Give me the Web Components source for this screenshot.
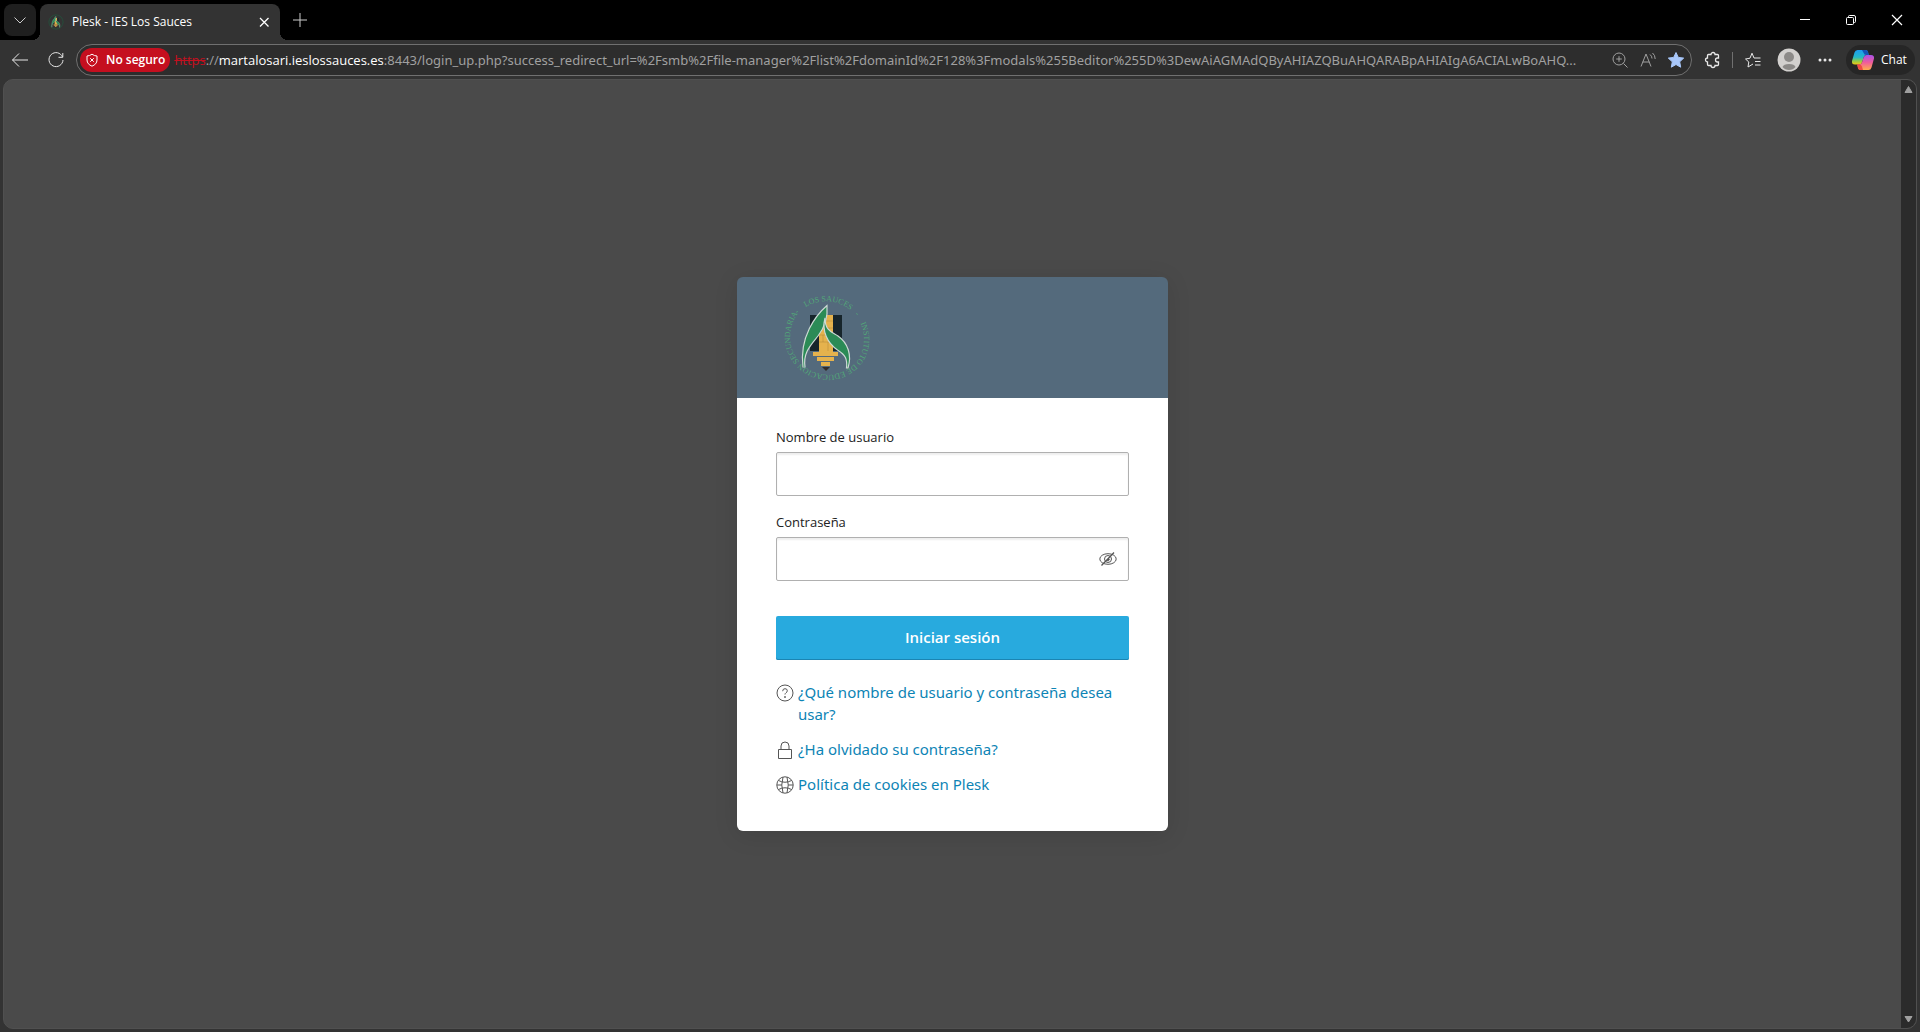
<!DOCTYPE html>
<html lang="es">
<head>
<meta charset="utf-8">
<title>Plesk - IES Los Sauces</title>
<style>
  body {
    margin: 0;
    background: #333;
    font-family: "Open Sans", "Noto Sans", sans-serif;
  }
</style>
</head>
<body>
<browser-window>
  <tab-strip slot="tabs">
    <browser-tab>Plesk - IES Los Sauces</browser-tab>
  </tab-strip>
  <tool-bar slot="toolbar">
    <address-bar scheme="https" host="martalosari.ieslossauces.es" path=":8443/login_up.php?success_redirect_url=%2Fsmb%2Ffile-manager%2Flist%2FdomainId%2F128%3Fmodals%255Beditor%255D%3DewAiAGMAdQByAHIAZQBuAHQARABpAHIAIgA6ACIALwBoAHQ...">No seguro</address-bar>
  </tool-bar>
  <login-card>
    <login-field label="Nombre de usuario" type="text"></login-field>
    <login-field label="Contraseña" type="password"></login-field>
    <login-button>Iniciar sesión</login-button>
    <login-link slot="links" icon="question">¿Qué nombre de usuario y contraseña desea usar?</login-link>
    <login-link slot="links" icon="lock">¿Ha olvidado su contraseña?</login-link>
    <login-link slot="links" icon="globe">Política de cookies en Plesk</login-link>
  </login-card>
</browser-window>

<script>
const ICONS = {
  chevron: [16, `<path d="M2.5 5.5 8 11l5.5-5.5"/>`],
  close: [16, `<path d="m4 4 8.500 8.500M12.500 4 4 12.500" stroke-width="1.300"/>`],
  plus: [16, `<path d="M8 1v14M1 8h14"/>`],
  minimize: [12, `<path d="M1 5.500h10"/>`],
  restore: [12, `<rect x="1.500" y="3.500" width="7" height="7" rx="1"/><path d="M3.500 3.500v-1q0-1 1-1h4.500q1.500 0 1.500 1.500v4.500q0 1-1 1h-1"/>`],
  exit: [12, `<path d="m1 1 10 10M11 1 1 11" stroke-width="1.200"/>`],
  back: [20, `<path d="M18 10H2.500M9 3.500 2.500 10 9 16.500"/>`],
  reload: [20, `<path d="M16.500 7A7 7 0 1 0 17 10M16.800 3v4.300h-4.300"/>`],
  shield: [14, `<path d="M7 1.200Q9.500 3 12 3v4c0 3-2 5-5 6.200C4 12 2 10 2 7V3Q4.500 3 7 1.200zM5.200 5.200l3.600 3.600M8.800 5.200 5.200 8.800"/>`],
  zoom: [18, `<circle cx="8" cy="8" r="6"/><path d="m12.500 12.500 4 4M8 5.200v5.600M5.200 8h5.600"/>`],
  read: [18, `<path d="m2 15.500 5-12.500 5 12.500M3.700 11h6.600M11 3.500q2 1.500 2 4M13.500 2q2.700 2.200 2.700 6"/>`],
  star: [18, `<path d="m9 1.500 2.300 4.900 5.400.700-4 3.700 1 5.400L9 13.500l-4.700 2.700 1-5.400-4-3.700 5.400-.700z" fill="currentColor"/>`],
  puzzle: [18, `<path d="M4.500 3.500h2.500a2 2 0 0 1 4 0h2.500q1 0 1 1v2.500h-1a2 2 0 0 0 0 4h1v2.500q0 1-1 1H11a2 2 0 0 1-4 0H4.500q-1 0-1-1V11a2 2 0 0 1 0-4V4.500q0-1 1-1z" stroke-width="1.300"/>`],
  favorites: [18, `<path d="M9 13 4 16l.800-5L1.500 8 6 7.200l2-5 2 4.800h6.500M11 10.500h5.500M11 14h5.500"/>`],
  avatar: [24, `<circle cx="12" cy="12" r="11.500" fill="#d2d0ce" stroke="none"/><circle cx="12" cy="9" r="5" fill="#8c8a88" stroke="none"/><path d="M5.500 19q1-3 6.500-3t6.500 3Q16 22 12 22t-6.500-3z" fill="#8c8a88" stroke="none"/>`],
  dots: [16, `<g fill="currentColor" stroke="none"><circle cx="3" cy="8" r="1.500"/><circle cx="8" cy="8" r="1.500"/><circle cx="13" cy="8" r="1.500"/></g>`],
  copilot: [24, `
    <defs>
      <linearGradient id="cool" x1="0" y1="0" x2="0" y2="1"><stop stop-color="#1c9df0"/><stop offset=".5" stop-color="#25b8c8"/><stop offset=".75" stop-color="#8ccb4b"/><stop offset="1" stop-color="#f2c713"/></linearGradient>
      <linearGradient id="warm" x1="0" y1="0" x2="0" y2="1"><stop stop-color="#a852ea"/><stop offset=".5" stop-color="#f05c9b"/><stop offset="1" stop-color="#ffac4c"/></linearGradient>
    </defs>
    <g stroke="none">
      <path d="M6.500 2h8q2 0 2.500 2l.700 3h-2.200q-2 0-2.700 2l-1.600 5q-.700 2.500-3 2.500H4Q.500 16.500 1 13L3.500 4.500Q4.300 2 6.500 2z" fill="url(#cool)"/>
      <path d="M11 2h3.500q2 0 2.500 2l.700 3h-2.500q-2 0-2.500-2z" fill="#1554b8"/>
      <path d="M17.500 22h-8q-2 0-2.500-2l-.700-3.500h2q2 0 2.700-2l1.600-5q.700-2.500 3-2.500H20q3.500 0 3 3.500L20.500 19.500Q19.700 22 17.500 22z" fill="url(#warm)"/>
      <path d="M12 22H9.500Q7.500 22 7 20l-.700-3.500h2q2 0 2.700 2z" fill="#f04a45"/>
    </g>`],
  up: [15, `<path d="M7.500 4.500 11 10.500H4z" fill="currentColor" stroke-linejoin="round"/>`],
  down: [15, `<path d="M4 4.500h7l-3.500 5.500z" fill="currentColor" stroke-linejoin="round"/>`],
  hidden: [18, `<ellipse cx="9" cy="9" rx="8.200" ry="5.300"/><circle cx="9" cy="9" r="3.500"/><path d="M15 2.500 2.500 15.500M10.500 9 8.500 11" stroke-width="1.300"/>`],
  question: [18, `<circle cx="9" cy="9" r="8"/><path d="M6.700 7.200Q6.700 4.700 9 4.700t2.300 2.100Q11.300 8 10 8.800 9 9.500 9 10.500"/><circle cx="9" cy="13" r=".500" fill="currentColor"/>`],
  lock: [18, `<path d="M2.500 8.500h13v9h-13zM5 8.500V5q0-4 4-4t4 4v3.500"/>`],
  globe: [18, `<circle cx="9" cy="9" r="8.200"/><path d="M7 1.200Q4.500 9 7 16.800M11 1.200Q13.500 9 11 16.800M2.500 4.500Q9 8 15.500 4.500M2.500 13.500Q9 10 15.500 13.500M1 9h4.700M12.300 9H17"/>`]
};

// Crest of the school: two willow leaves over a pencil
const CREST = /*HTML*/ `
  <path d="M31 25h32v36H31z" fill="#17252b"/>
  <path d="M40 25h14v37H40z" fill="#e5b24d"/>
  <path d="M40 31h14M40 38h14M40 45h14M40 52h14M47 25v6M44 31v7M50 38v7M44 45v7M49 52v9" stroke="#b98d3b" stroke-width=".6"/>
  <path d="M34 62h25v4H34zM38 67h17v4H38zM42 72h9v4h-9z" fill="#e5b24d"/>
  <path d="M43 77h8l-4 4z" fill="#322d2b"/>
  <path d="M48 15.500C37 25 20 47 24 77h2C24 63 31 56 39 46c7-9 10-19 9-30.500z" fill="#2b8b56" stroke="#ccd9d4" stroke-width="1.200"/>
  <path d="M46 28c0 13 7 14 13 18 10 7 14 19 10 32h-1.500c1-9-1-13-9-18-10-7-16-19-12.500-32z" fill="#2b8b56" stroke="#ccd9d4" stroke-width="1.200"/>
`;

// Defines an element whose shadow root is cloned from a template
function define(name, html, setup) {
  const template = document.createElement("template");
  template.innerHTML = `<style>
    :host, *, *::before, *::after { box-sizing: border-box; }
    button { border: 0; padding: 0; margin: 0; background: none; color: inherit; font: inherit; display: grid; place-items: center; }
  </style>` + html;

  customElements.define(name, class extends HTMLElement {
    constructor() {
      super();
      this.attachShadow({ mode: "open" }).appendChild(template.content.cloneNode(true));
    }

    connectedCallback() {
      if (setup) setup(this, this.shadowRoot);
    }
  });
}

define("ui-icon", /*HTML*/ `
  <style>
    :host { display: block; flex: none; }
    svg { display: block; }
  </style>
  <svg fill="none" stroke="currentColor" aria-hidden="true"></svg>
`, (host, root) => {
  const [size, body] = ICONS[host.getAttribute("name")];
  const svg = root.querySelector("svg");
  svg.setAttribute("width", size);
  svg.setAttribute("height", size);
  svg.setAttribute("viewBox", `0 0 ${size} ${size}`);
  svg.innerHTML = body;
});

// The motto runs clockwise round the whole crest, starting at the upper left dash
define("school-logo", /*HTML*/ `
  <style>
    :host { display: block; }
    svg { display: block; }
    text { font: 8px "Liberation Serif", serif; fill: #52a878; }
  </style>
  <svg width="96" height="96" viewBox="0 0 96 96" fill="none" role="img" aria-label="IES Los Sauces">
    <path id="ring" d="M18.500 24.100A38 38 0 0 1 77.500 71.900A38 38 0 0 1 18.500 24.100"/>
    ${CREST}
    <text><textPath href="#ring">-&nbsp;&nbsp;&nbsp;&nbsp;LOS SAUCES&nbsp;&nbsp;&nbsp;-&nbsp;&nbsp;&nbsp;&nbsp;INSTITUTO DE EDUCACION SECUNDARIA</textPath></text>
  </svg>
`);

define("browser-tab", /*HTML*/ `
  <style>
    :host {
      position: relative;
      display: flex;
      align-items: center;
      width: 240px;
      height: 36px;
      padding: 0 8px;
      background: #333;
      border-radius: 8px 8px 0 0;
      font-size: 12px;
      color: #fff;
    }
    :host::before, :host::after {
      content: "";
      position: absolute;
      bottom: 0;
      width: 8px;
      height: 8px;
    }
    :host::before { left: -8px; background: radial-gradient(circle at 0 0, transparent 8px, #333 8px); }
    :host::after { right: -8px; background: radial-gradient(circle at 100% 0, transparent 8px, #333 8px); }
    svg { flex: none; }
    span { flex: 1; padding-left: 8px; padding-bottom: 2px; white-space: nowrap; }
    button { width: 16px; height: 32px; }
  </style>
  <svg width="16" height="16" viewBox="3 3 90 90" fill="none" aria-hidden="true">
    <circle cx="48" cy="48" r="40" stroke="#24503c" stroke-width="5"/>${CREST}
  </svg>
  <span><slot></slot></span>
  <button aria-label="Cerrar pestaña"><ui-icon name="close"></ui-icon></button>
`);

define("tab-strip", /*HTML*/ `
  <style>
    :host { display: flex; height: 40px; background: #000; color: #fff; }
    .menu { width: 32px; height: 32px; margin: 4px; background: #1f1f1f; border-radius: 8px; color: #ccc; }
    .tabs { display: flex; align-items: end; flex: 1; }
    .new { width: 40px; height: 32px; align-self: center; color: #ccc; }
    .window { display: flex; }
    .window button { width: 46px; height: 40px; }
  </style>
  <button class="menu" aria-label="Acciones de pestaña"><ui-icon name="chevron"></ui-icon></button>
  <div class="tabs">
    <slot></slot>
    <button class="new" aria-label="Nueva pestaña"><ui-icon name="plus"></ui-icon></button>
  </div>
  <div class="window">
    <button aria-label="Minimizar"><ui-icon name="minimize"></ui-icon></button>
    <button aria-label="Restaurar"><ui-icon name="restore"></ui-icon></button>
    <button aria-label="Cerrar"><ui-icon name="exit"></ui-icon></button>
  </div>
`);

define("address-bar", /*HTML*/ `
  <style>
    :host {
      display: flex;
      align-items: center;
      flex: 1;
      min-width: 0;
      height: 32px;
      padding: 0 1px 0 3px;
      border: 1px solid #707070;
      border-radius: 16px;
      background: #2d2d2d;
      color: #a0a0a0;
      font-size: 13px;
    }
    .badge {
      display: flex;
      align-items: center;
      gap: 7px;
      flex: none;
      height: 24px;
      padding: 0 5px;
      margin-right: 4px;
      border-radius: 12px;
      background: #c50f1f;
      color: #fff;
      font-size: 12px;
      font-weight: 600;
    }
    .url { flex: 1; min-width: 0; overflow: hidden; white-space: nowrap; }
    .scheme { color: #c50f1f; text-decoration: line-through; }
    .host { color: #fff; }
    .path { font-family: "Noto Sans", sans-serif; }
    .action { width: 28px; height: 28px; flex: none; }
    .favorite { color: #a8c7fa; }
  </style>
  <button class="badge"><ui-icon name="shield"></ui-icon><slot></slot></button>
  <div class="url" role="textbox" aria-label="Barra de direcciones"><span class="scheme"></span>://<span class="host"></span><span class="path"></span></div>
  <button class="action" aria-label="Zoom"><ui-icon name="zoom"></ui-icon></button>
  <button class="action" aria-label="Leer en voz alta"><ui-icon name="read"></ui-icon></button>
  <button class="action favorite" aria-label="Favorito"><ui-icon name="star"></ui-icon></button>
`, (host, root) => {
  for (const part of ["scheme", "host", "path"]) {
    root.querySelector("." + part).textContent = host.getAttribute(part);
  }
});

define("tool-bar", /*HTML*/ `
  <style>
    :host {
      display: flex;
      align-items: center;
      height: 39px;
      padding: 0 5px 0 2px;
      background: #333;
      color: #e8e8e8;
    }
    button { width: 36px; height: 32px; flex: none; }
    .address { display: flex; flex: 1; min-width: 0; margin: 0 3px 0 2px; }
    .divider { width: 1px; height: 16px; margin: 0 2px 0 1px; background: #707070; }
    .chat {
      display: flex;
      align-items: center;
      gap: 6px;
      width: 69px;
      height: 30px;
      margin-left: 3px;
      padding-left: 5px;
      border-radius: 15px;
      background: #262626;
      color: #fff;
      font-size: 12px;
    }
  </style>
  <button aria-label="Atrás"><ui-icon name="back"></ui-icon></button>
  <button aria-label="Actualizar"><ui-icon name="reload"></ui-icon></button>
  <div class="address"><slot></slot></div>
  <button aria-label="Extensiones"><ui-icon name="puzzle"></ui-icon></button>
  <div class="divider"></div>
  <button aria-label="Favoritos"><ui-icon name="favorites"></ui-icon></button>
  <button aria-label="Perfil"><ui-icon name="avatar"></ui-icon></button>
  <button aria-label="Configuración y más"><ui-icon name="dots"></ui-icon></button>
  <button class="chat"><ui-icon name="copilot"></ui-icon>Chat</button>
`);

define("browser-window", /*HTML*/ `
  <style>
    :host { display: flex; flex-direction: column; min-height: 100vh; }
    .view {
      display: flex;
      flex: 1;
      margin: 0 3px 3px;
      border: 1px solid #505050;
      border-radius: 10px;
      overflow: hidden;
      background: #4a4a4a;
    }
    main { display: grid; place-items: center; flex: 1; }
    .scroll {
      display: flex;
      flex-direction: column;
      justify-content: space-between;
      width: 15px;
      background: #2b2b2b;
      color: #a0a0a0;
    }
    .scroll button { height: 18px; }
  </style>
  <slot name="tabs"></slot>
  <slot name="toolbar"></slot>
  <div class="view">
    <main><slot></slot></main>
    <div class="scroll">
      <button aria-label="Subir"><ui-icon name="up"></ui-icon></button>
      <button aria-label="Bajar"><ui-icon name="down"></ui-icon></button>
    </div>
  </div>
`);

define("login-card", /*HTML*/ `
  <style>
    :host {
      display: block;
      width: 431px;
      border-radius: 6px;
      overflow: hidden;
      box-shadow: 0 4px 24px rgba(0, 0, 0, .1);
    }
    header { height: 121px; padding: 13px 42px; background: #546a7c; }
    form { display: flex; flex-direction: column; padding: 28px 39px 0; background: #fff; }
    .links { display: flex; flex-direction: column; gap: 13px; padding: 21px 39px 36px; background: #fff; }
  </style>
  <header><school-logo></school-logo></header>
  <form><slot></slot></form>
  <div class="links"><slot name="links"></slot></div>
`);

define("login-field", /*HTML*/ `
  <style>
    :host { display: block; margin-bottom: 15px; }
    label { display: block; height: 26px; line-height: 22px; font-size: 13px; color: #222; }
    .control {
      display: flex;
      align-items: center;
      height: 44px;
      border: 1px solid #b0b0b0;
      border-radius: 2px;
      background: #fff;
      box-shadow: inset 0 2px 2px #eee;
    }
    input { flex: 1; min-width: 0; height: 42px; padding: 0 12px; border: 0; outline: 0; background: none; font: 15px "Open Sans", sans-serif; }
    button { width: 18px; height: 42px; margin-right: 11px; color: #555; }
    button[hidden] { display: none; }
  </style>
  <label for="input"></label>
  <div class="control">
    <input id="input">
    <button type="button" aria-label="Mostrar contraseña"><ui-icon name="hidden"></ui-icon></button>
  </div>
`, (host, root) => {
  const type = host.getAttribute("type");
  root.querySelector("label").textContent = host.getAttribute("label");
  root.querySelector("input").type = type;
  root.querySelector("button").hidden = type != "password";
});

define("login-button", /*HTML*/ `
  <style>
    :host { display: block; margin-top: 20px; }
    button {
      width: 100%;
      height: 44px;
      padding-bottom: 2px;
      border-radius: 2px;
      background: #28aade;
      box-shadow: inset 0 -1px #1b85b3;
      color: #fff;
      font-size: 15px;
      font-weight: 600;
    }
  </style>
  <button type="submit"><slot></slot></button>
`);

define("login-link", /*HTML*/ `
  <style>
    :host { display: flex; gap: 4px; font: 15px/22px "Noto Sans", sans-serif; }
    ui-icon { margin-top: 3px; color: #555; }
    a { color: #0d84b5; text-decoration: none; }
  </style>
  <a href="#"><slot></slot></a>
`, (host, root) => {
  const icon = document.createElement("ui-icon");
  icon.setAttribute("name", host.getAttribute("icon"));
  root.querySelector("a").before(icon);
});
</script>
</body>
</html>
